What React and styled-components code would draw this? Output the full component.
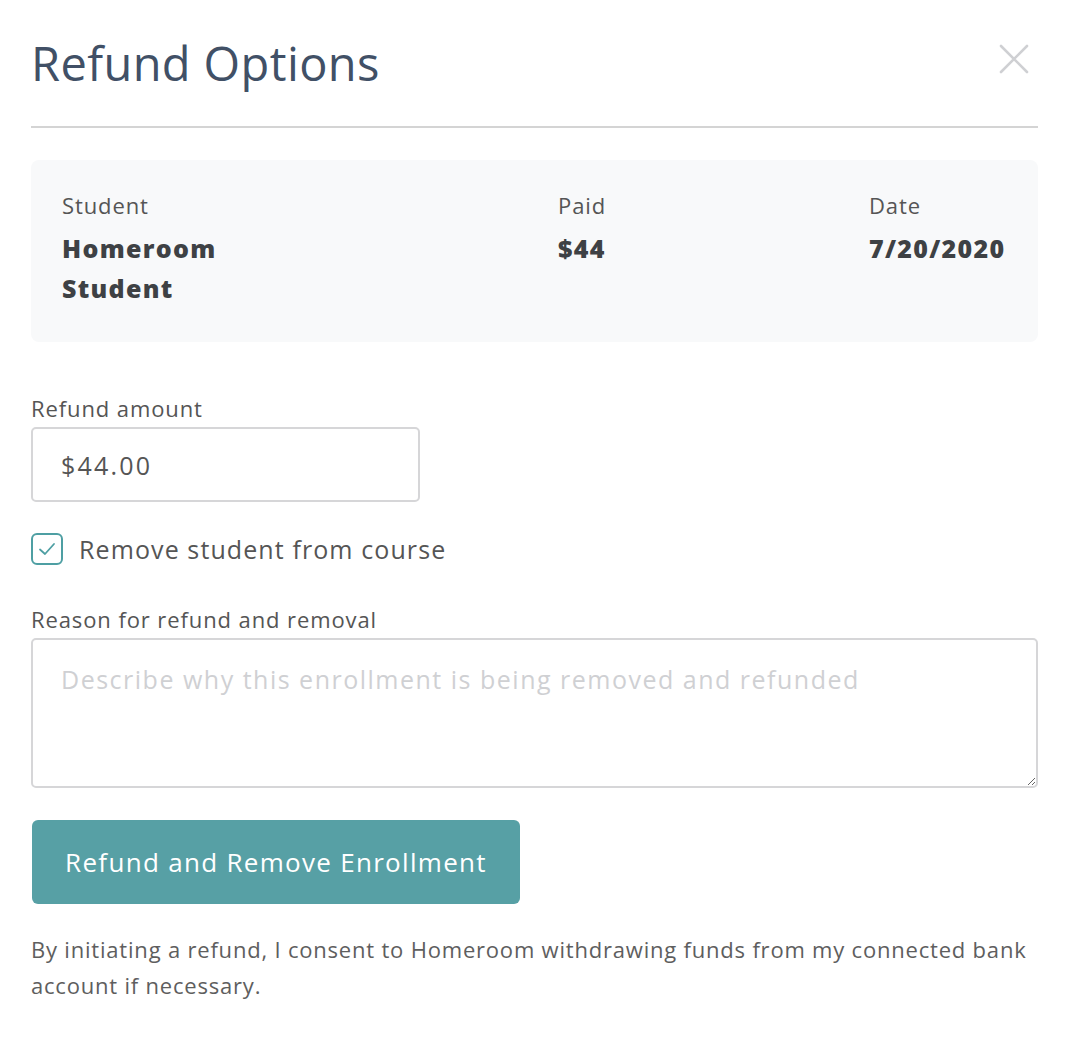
import React from "react";
import styled, { createGlobalStyle } from "styled-components";

const Global = createGlobalStyle`
  html, body { margin: 0; padding: 0; background: #ffffff; }
  body { font-family: "Open Sans", "Noto Sans", sans-serif; color: #555; }
  * { box-sizing: border-box; }
`;

const Modal = styled.div`
  width: 1068px;
  padding: 0 30px 40px 31px;
  display: flex;
  flex-direction: column;
`;

const Header = styled.header`
  display: flex;
  align-items: center;
  justify-content: space-between;
  height: 128px;
  border-bottom: 2px solid #d4d4d4;
`;

const Title = styled.h1`
  margin: 0;
  font-family: "Open Sans", sans-serif;
  font-weight: 400;
  font-size: 47px;
  color: #415066;
  letter-spacing: 0.4px;
`;

const CloseButton = styled.button`
  border: none;
  background: transparent;
  padding: 0;
  margin: 0 9px 8px 0;
  width: 30px;
  height: 30px;
  display: flex;
  align-items: center;
  justify-content: center;
  cursor: pointer;
`;

const InfoBox = styled.section`
  margin-top: 32px;
  background: #f8f9fa;
  border-radius: 8px;
  padding: 30px 31px 34px 31px;
  display: grid;
  grid-template-columns: 496px 311px auto;
`;

const InfoCol = styled.div`
  display: flex;
  flex-direction: column;
`;

const InfoLabel = styled.div`
  font-size: 22px;
  line-height: 30px;
  letter-spacing: 0.9px;
  color: #555;
`;

const InfoValue = styled.div`
  margin-top: 8px;
  font-size: 25px;
  font-weight: 800;
  line-height: 40px;
  letter-spacing: 1.3px;
  color: #3e4144;
  max-width: ${(p) => p.$max || "none"};
`;

const Field = styled.div`
  display: flex;
  flex-direction: column;
  margin-top: ${(p) => p.$mt || "0"};
`;

const Label = styled.label`
  font-size: 22px;
  line-height: 30px;
  letter-spacing: 0.9px;
  color: #555;
  margin-bottom: 4px;
`;

const Input = styled.input`
  width: 389px;
  height: 75px;
  border: 2px solid #d6d6d8;
  border-radius: 5px;
  padding: 0 28px;
  font-family: "Open Sans", sans-serif;
  font-size: 25px;
  letter-spacing: 2.2px;
  color: #555;
  outline: none;
`;

const CheckRow = styled.label`
  display: flex;
  align-items: center;
  gap: 16px;
  margin-top: 30px;
  font-size: 25px;
  letter-spacing: 1.1px;
  color: #555;
`;

const Box = styled.span`
  width: 32px;
  height: 32px;
  border: 2px solid #4e9fa3;
  border-radius: 6px;
  display: flex;
  align-items: center;
  justify-content: center;
`;

const TextArea = styled.textarea`
  width: 100%;
  height: 150px;
  border: 2px solid #d6d6d8;
  border-radius: 5px;
  padding: 22px 28px;
  font-family: "Open Sans", sans-serif;
  font-size: 25px;
  letter-spacing: 1.5px;
  color: #555;
  outline: none;
  resize: vertical;
  &::placeholder { color: #cfd0d3; }
`;

const PrimaryButton = styled.button`
  margin-top: 32px;
  margin-left: 1px;
  width: 488px;
  height: 84px;
  background: #57a0a5;
  color: #fff;
  border: none;
  border-radius: 6px;
  font-family: "Open Sans", sans-serif;
  font-size: 26px;
  letter-spacing: 1.3px;
  cursor: pointer;
`;

const Note = styled.p`
  margin: 27px 0 0;
  font-size: 22px;
  line-height: 36px;
  letter-spacing: 0.8px;
  color: #5e5e5e;
`;

export default function App() {
  return (
    <>
      <Global />
      <Modal>
        <Header>
          <Title>Refund Options</Title>
          <CloseButton aria-label="Close">
            <svg width="30" height="30" viewBox="0 0 30 30">
              <path d="M2 2 L28 28 M28 2 L2 28" stroke="#cfd0d3" strokeWidth="2.6" strokeLinecap="round" />
            </svg>
          </CloseButton>
        </Header>
        <InfoBox>
          <InfoCol>
            <InfoLabel>Student</InfoLabel>
            <InfoValue $max="200px">Homeroom Student</InfoValue>
          </InfoCol>
          <InfoCol>
            <InfoLabel>Paid</InfoLabel>
            <InfoValue>$44</InfoValue>
          </InfoCol>
          <InfoCol>
            <InfoLabel>Date</InfoLabel>
            <InfoValue>7/20/2020</InfoValue>
          </InfoCol>
        </InfoBox>
        <Field $mt="51px">
          <Label>Refund amount</Label>
          <Input defaultValue="$44.00" />
        </Field>
        <CheckRow>
          <Box>
            <svg width="20" height="20" viewBox="0 0 20 20">
              <path d="M3 10.5 L8 15 L17 5" fill="none" stroke="#4e9fa3" strokeWidth="1.8" strokeLinecap="round" strokeLinejoin="round" />
            </svg>
          </Box>
          Remove student from course
        </CheckRow>
        <Field $mt="38px">
          <Label>Reason for refund and removal</Label>
          <TextArea placeholder="Describe why this enrollment is being removed and refunded" />
        </Field>
        <PrimaryButton>Refund and Remove Enrollment</PrimaryButton>
        <Note>
          By initiating a refund, I consent to Homeroom withdrawing funds from my connected bank account if necessary.
        </Note>
      </Modal>
    </>
  );
}
